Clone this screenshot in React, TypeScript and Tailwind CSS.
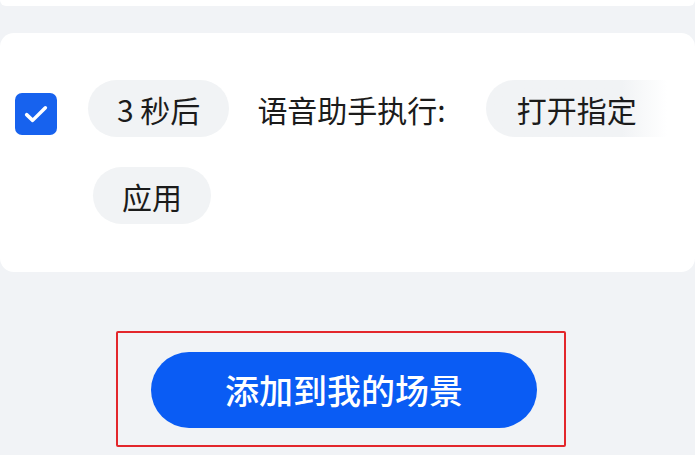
import React from 'react';

const font = { fontFamily: '"Noto Sans CJK SC", "Noto Sans", sans-serif' };

const Chip = ({ children, fade = false }: { children: React.ReactNode; fade?: boolean }) => (
    <div
        className={
            fade
                ? 'flex h-[57px] items-center rounded-l-full bg-gradient-to-r from-[#f1f3f5] from-75% to-white pl-[31px] pr-[30px]'
                : 'flex h-[57px] items-center rounded-full bg-[#f1f3f5] px-[29px]'
        }
    >
        {children}
    </div>
);

const CheckBox = () => (
    <div className="flex h-[42px] w-[42px] shrink-0 items-center justify-center rounded-[7px] bg-[#1762ee]">
        <svg width="30" height="30" viewBox="0 0 24 24" fill="none">
            <path d="M4.5 12.5l4.8 4.6L19.5 7" stroke="white" strokeWidth="2.8" strokeLinecap="round" strokeLinejoin="round" />
        </svg>
    </div>
);

const App = () => {
    return (
        <div className="min-h-[455px] w-[695px] overflow-hidden bg-[#f1f3f6] text-[#1b1b1b]" style={font}>
            <div className="h-[6px] rounded-b-[10px] bg-white" />
            <div className="h-[27px]" />

            {/* scene card */}
            <div className="flex items-start rounded-[14px] bg-white pb-[48px] pl-[15px] pt-[47px]">
                <div className="mt-[13px]">
                    <CheckBox />
                </div>
                <div className="ml-[31px] flex w-[595px] flex-wrap items-center gap-y-[30px] text-[30px] leading-none">
                    <Chip>3 秒后</Chip>
                    <span className="ml-[28px] mr-[40px]">语音助手执行:</span>
                    <Chip fade>打开指定</Chip>
                    <div className="ml-[5px]">
                        <Chip>应用</Chip>
                    </div>
                </div>
            </div>

            <div className="ml-[116px] mt-[59px] w-[450px] rounded-[2px] border-2 border-[#e3262b] pb-[17px] pl-[33px] pt-[19px]">
                <button className="flex h-[76px] w-[386px] items-center justify-center rounded-full bg-[#0a5cf4] text-[34px] font-medium leading-none text-white">
                    添加到我的场景
                </button>
            </div>
        </div>
    );
};

export default App;
